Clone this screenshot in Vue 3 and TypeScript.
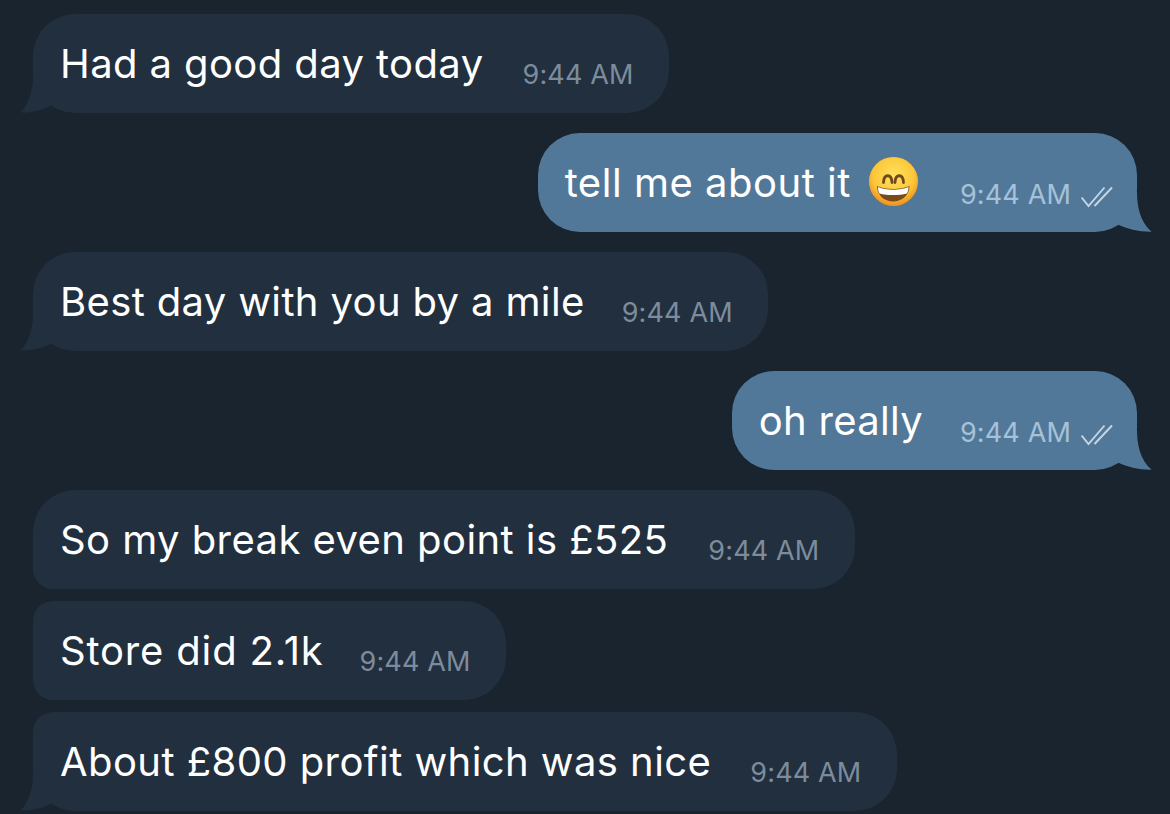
<script setup lang="ts">
interface Message {
  text: string;
  out?: boolean;
  emoji?: boolean;
  tail?: boolean;
  shape?: string;
  gap: number;
  // tracking and text-to-time gap differ a little per line
  spacing: number;
  timeGap: number;
}

const messages: Message[] = [
  { text: 'Had a good day today', tail: true, gap: 20, spacing: 0.4, timeGap: 39 },
  { text: 'tell me about it', out: true, emoji: true, tail: true, gap: 20, spacing: 0.52, timeGap: 40 },
  { text: 'Best day with you by a mile', tail: true, gap: 20, spacing: 0.36, timeGap: 37 },
  { text: 'oh really', out: true, tail: true, gap: 20, spacing: 0.3, timeGap: 37 },
  { text: 'So my break even point is £525', shape: 'first', gap: 12, spacing: 0.43, timeGap: 40 },
  { text: 'Store did 2.1k', shape: 'middle', gap: 12, spacing: 0.83, timeGap: 36 },
  { text: 'About £800 profit which was nice', shape: 'last', tail: true, gap: 0, spacing: 0.43, timeGap: 39 },
];
</script>

<template>
  <div class="chat">
    <div
      v-for="(m, i) in messages"
      :key="i"
      :class="['bubble', m.out ? 'bubble--out' : 'bubble--in', m.shape ? 'bubble--' + m.shape : '']"
      :style="{ marginBottom: m.gap + 'px' }"
    >
      <span class="text" :style="{ letterSpacing: m.spacing + 'px' }">{{ m.text }}</span>
      <svg v-if="m.emoji" class="emoji" width="50" height="50" viewBox="0 0 50 50">
        <defs>
          <radialGradient id="face" cx="50%" cy="38%" r="62%">
            <stop offset="0%" stop-color="#ffe25e" />
            <stop offset="68%" stop-color="#fcc638" />
            <stop offset="100%" stop-color="#ee8f20" />
          </radialGradient>
        </defs>
        <circle cx="24.5" cy="24.5" r="24.5" fill="url(#face)" />
        <path d="M14.5 25.5 C15 16.5 22.5 16.5 23 25.5" fill="none" stroke="#70491c" stroke-width="2.8" stroke-linecap="round" />
        <path d="M26 25.5 C26.5 16.5 34 16.5 34.5 25.5" fill="none" stroke="#70491c" stroke-width="2.8" stroke-linecap="round" />
        <path d="M8 29 C16 33 32 33 40.5 29 C40.5 38 33 44.5 24.2 44.5 C15 44.5 8 38 8 29 Z" fill="#7a4a1a" />
        <path d="M9 30 C17 33.5 31 33.5 39.5 30 C39.5 33 38.8 35 37.8 36.5 C30 38.6 18 38.6 10.5 36.5 C9.6 35 9 33 9 30 Z" fill="#fff" />
      </svg>
      <span class="meta" :style="{ marginLeft: m.timeGap + 'px' }">
        <span class="time">9:44 AM</span>
        <svg v-if="m.out" class="ticks" width="32" height="22" viewBox="0 0 32 22">
          <path d="M0.7 11.5 L7.5 20 L23.5 1.5" fill="none" stroke="currentColor" stroke-width="1.9" />
          <path d="M13.5 20 L31 1.5" fill="none" stroke="currentColor" stroke-width="1.9" />
        </svg>
      </span>
      <svg v-if="m.tail && !m.out" class="tail tail--in" width="40" height="40" viewBox="0 0 40 40">
        <path d="M13 0 C13.5 14 10 30 0.5 39.5 C12 40 23 37 32 32 L40 0 Z" fill="#212f3f" />
      </svg>
      <svg v-if="m.tail && m.out" class="tail tail--out" width="40" height="40" viewBox="0 0 40 40">
        <path d="M25 0 C25 14 28 30 39.5 39.7 C28 40 15 37 5 32 L0 0 Z" fill="#527899" />
      </svg>
    </div>
  </div>
</template>

<style scoped>
.chat {
  width: 1170px;
  height: 814px;
  box-sizing: border-box;
  padding: 14px 33px 0;
  display: flex;
  flex-direction: column;
  align-items: flex-start;
  overflow: hidden;
  background: #19242f;
  font-family: Inter, "Liberation Sans", sans-serif;
}

.bubble {
  position: relative;
  height: 99px;
  box-sizing: border-box;
  padding: 0 35.5px 0 27px;
  display: flex;
  align-items: center;
  border-radius: 42px;
  color: #fff;
}

.bubble--in {
  background: #212f3f;
}

.bubble--out {
  align-self: flex-end;
  background: #527899;
  padding-right: 24px;
}

.bubble--first {
  border-bottom-left-radius: 20px;
}

.bubble--middle {
  border-top-left-radius: 20px;
  border-bottom-left-radius: 20px;
}

.bubble--last {
  border-top-left-radius: 20px;
}

.text {
  font-size: 40px;
  line-height: 48px;
  white-space: nowrap;
}

.emoji {
  margin-left: 18px;
  margin-right: 1px;
  margin-top: -1px;
}

.meta {
  display: flex;
  align-items: center;
  margin-top: 22px;
}

.bubble--out .meta {
  margin-top: 24px;
}

.time {
  font-size: 27px;
  line-height: 32px;
  letter-spacing: 0.15px;
  white-space: nowrap;
  color: #7d8c9c;
}

.bubble--out .time {
  color: #a6c2d9;
}

.ticks {
  margin-left: 10px;
  margin-top: 4px;
  color: #c3d6e6;
}

.tail {
  position: absolute;
  bottom: 0;
}

.tail--in {
  left: -13px;
}

.tail--out {
  right: -15px;
}
</style>
